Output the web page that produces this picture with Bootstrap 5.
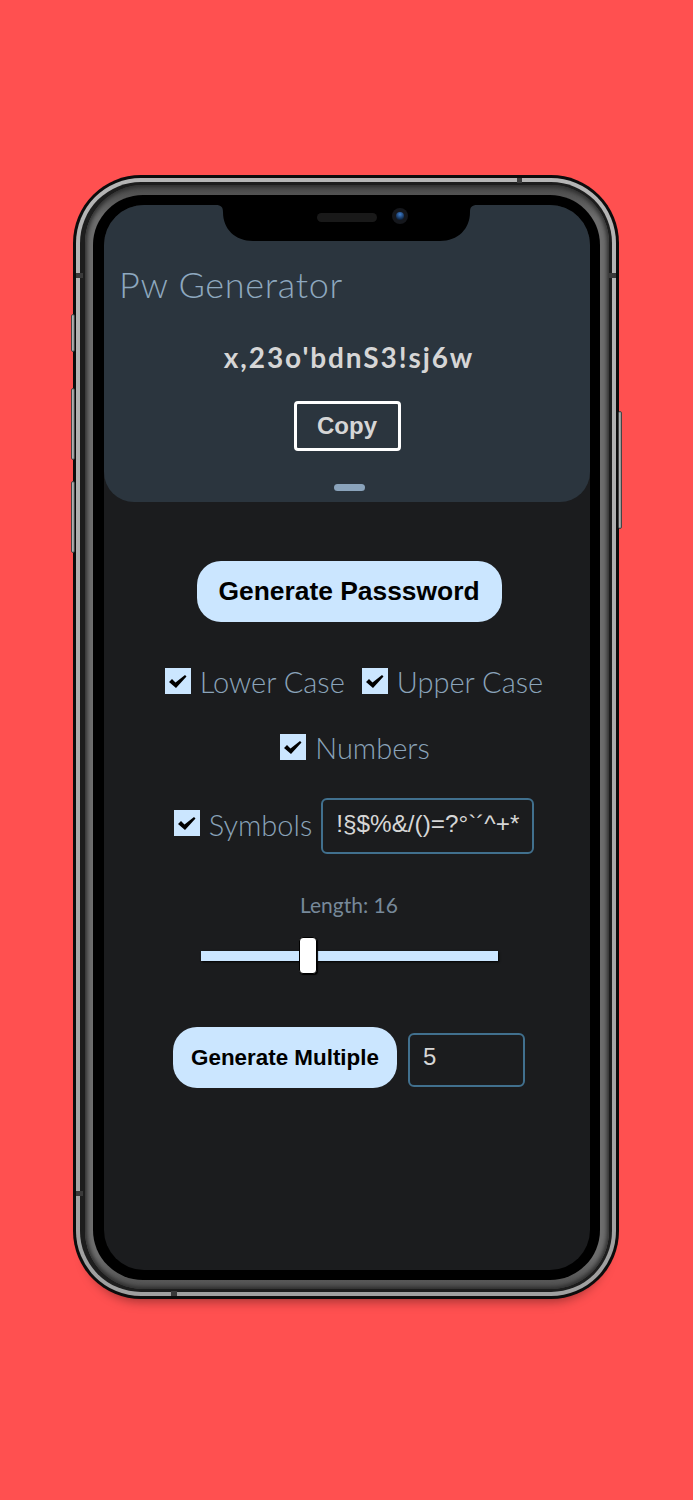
<!DOCTYPE html>
<html lang="en">
<head>
<meta charset="utf-8">
<title>Pw Generator</title>
<link rel="stylesheet" href="https://cdn.jsdelivr.net/npm/bootstrap@5.3.0/dist/css/bootstrap.min.css">
<style>
html,body{margin:0;height:1500px;background:#ff5050;overflow:hidden}
.stage{padding:175px 74px 0 73px}
.ph-shell{position:relative;height:1124px;border-radius:68px;background:#0c0c0c;padding:3px;box-shadow:0 14px 12px -12px rgba(0,0,0,.4)}
.ph-silver{height:100%;border-radius:65px;background:linear-gradient(180deg,#b5b5b5,#a0a0a0);padding:4px}
.ph-dark{height:100%;border-radius:61px;background:#1d1d1d;padding:3px 3px 3px 5px}
.ph-gray{height:100%;border-radius:58px;background:linear-gradient(180deg,#484848 0,#6d6d6d 3%,#6d6d6d 97%,#4f4f4f 100%);padding:10px 9px 9px 8px;box-shadow:inset 0 0 4px 2px #2c2c2c}
.ph-black{height:100%;border-radius:50px;background:#000;padding:10px 10px 10px 11px;position:relative}
.ph-screen{height:100%;border-radius:40px;background:#1b1c1e;overflow:hidden;display:flex;flex-direction:column;font-family:Lato,"Open Sans",sans-serif}
.side-key{position:absolute;background:linear-gradient(90deg,#bdbdbd,#8e8e8e);border:1px solid #444;border-radius:2px;width:4px}
.key-a{left:-2px;top:139px;height:38px}
.key-b{left:-2px;top:213px;height:72px}
.key-c{left:-2px;top:306px;height:72px}
.key-d{right:-3px;top:236px;height:118px;width:4px}
.band{position:absolute;background:#3a3a3a}
.band-t{top:3px;left:444px;width:5px;height:5px}
.band-l{left:3px;top:98px;width:7px;height:5px}
.band-r{right:3px;top:98px;width:7px;height:5px}
.band-bl{left:3px;bottom:103px;width:7px;height:5px}
.band-b{bottom:3px;left:98px;width:6px;height:5px}
.notch{position:absolute;left:123px;top:10px;width:261px;height:36px}
.cam{position:absolute;left:299px;top:13px;width:16px;height:16px;border-radius:50%;background:#15171c;display:flex;align-items:center;justify-content:center}
.cam-lens{display:block;width:8px;height:8px;border-radius:50%;background:radial-gradient(circle at 50% 30%,#3f7fd0,#0e2340 75%)}
.spk{position:absolute;left:224px;top:18px;width:60px;height:9px;border-radius:5px;background:#191919}
.app-head{background:#2b353e;border-radius:0 0 30px 30px;height:297px;padding:58px 15px 0;flex:none;text-align:center;display:flex;flex-direction:column}
.app-title{font-family:Lato,sans-serif;font-weight:300;font-size:36px;line-height:42px;color:#8ea8bf;margin:0;text-align:left;letter-spacing:.7px}
.pw-out{font-family:Lato,sans-serif;font-weight:700;font-size:28px;line-height:34px;color:#d6d6d6;margin:35px 0 0 4px;letter-spacing:1.9px}
.btn-copy{width:107px;height:50px;margin:27px auto 0;padding:0;border:3px solid #fff;border-radius:4px;background:transparent;color:#d6d6d6;font:700 24px/1 "Liberation Sans",sans-serif}
.btn-copy:hover{color:#d6d6d6;border-color:#fff}
.grip{width:31px;height:7px;border-radius:4px;background:#8aa3bb;margin:33px auto 0 215px}
.app-body{flex:1;display:flex;flex-direction:column;align-items:center;padding:59px 0 0 4px}
.btn-sky{background:#cbe6ff;color:#000;border:0;border-radius:24px;font-family:"Liberation Sans",sans-serif;font-weight:700;padding:0}
.btn-sky:hover{background:#cbe6ff;color:#000}
.btn-gen{width:305px;height:61px;font-size:26.4px}
.btn-multi{width:224px;height:61px;font-size:22.4px}
.opt{display:flex;align-items:center;gap:9px;margin:0;font-weight:300;font-size:29px;line-height:34px;color:#8aa3b9}
.opt .form-check-input{width:26px;height:26px;margin:0 0 3px;border:0;border-radius:0;flex:none;background-color:#cbe6ff;background-size:26px 26px;background-position:center;background-image:url("data:image/svg+xml,%3Csvg xmlns='http://www.w3.org/2000/svg' viewBox='0 0 26 26'%3E%3Cpath d='M4 14l3-3 3.5 3.5L20 7l1.5 1.5L11 20z' fill='%23000'/%3E%3C/svg%3E")}
.opt-row-a{margin:43px 0 0 10px;gap:17px}
.opt-row-b{margin:32px 0 0 12px}
.opt-row-c{margin:33px 0 0 10px;gap:9px}
.opt-row-c .opt{margin-bottom:3px}
.field-dark{background:#1b1c1e;border:2px solid #41708e;border-radius:6px;color:#d6d6d6;font-family:"Liberation Sans",sans-serif;font-size:24px;outline:0;box-shadow:none}
.field-sym{width:213px;height:56px;padding:0 0 5px 13px;font-size:24.3px}
.field-num{width:117px;height:54px;padding:0 0 5px 13px;margin-top:4px}
.len-label{font-size:21px;line-height:24px;color:#77899a;margin:39px 0 0;font-weight:400}
.len-range{appearance:none;-webkit-appearance:none;display:block;width:297px;height:37px;margin:20px 0 0;background:transparent}
.len-range::-webkit-slider-runnable-track{height:10px;background:#cbe6ff;box-shadow:1px 1px 2px #000}
.len-range::-webkit-slider-thumb{-webkit-appearance:none;width:18px;height:37px;margin-top:-13.5px;background:#fff;border:1px solid #000;border-radius:4px;box-shadow:1px 1px 1px #000}
.multi-row{display:flex;align-items:center;gap:11px;margin-top:53px}
</style>
</head>
<body>
<div class="stage">
  <div class="ph-shell">
    <span class="side-key key-a"></span><span class="side-key key-b"></span><span class="side-key key-c"></span><span class="side-key key-d"></span>
    <div class="ph-silver"><div class="ph-dark"><div class="ph-gray"><div class="ph-black">
      <div class="ph-screen">
        <header class="app-head">
          <h1 class="app-title">Pw Generator</h1>
          <p class="pw-out">x,23o'bdnS3!sj6w</p>
          <button type="button" class="btn btn-copy">Copy</button>
          <div class="grip"></div>
        </header>
        <main class="app-body">
          <button type="button" class="btn btn-sky btn-gen">Generate Passsword</button>
          <div class="d-flex opt-row-a">
            <label class="opt"><input class="form-check-input" type="checkbox" checked>Lower Case</label>
            <label class="opt"><input class="form-check-input" type="checkbox" checked>Upper Case</label>
          </div>
          <label class="opt opt-row-b"><input class="form-check-input" type="checkbox" checked>Numbers</label>
          <div class="d-flex align-items-center opt-row-c">
            <label class="opt"><input class="form-check-input" type="checkbox" checked>Symbols</label>
            <input class="field-dark field-sym" type="text" value="!§$%&amp;/()=?°`´^+*" aria-label="Symbols">
          </div>
          <p class="len-label">Length: 16</p>
          <input class="len-range" type="range" min="4" max="38" value="16" aria-label="Length">
          <div class="multi-row">
            <button type="button" class="btn btn-sky btn-multi">Generate Multiple</button>
            <input class="field-dark field-num" type="text" value="5" aria-label="Count">
          </div>
        </main>
      </div>
      <svg class="notch" viewBox="0 0 261 36" aria-hidden="true"><path d="M0 0h261c-5 0-7 2-7 7 0 17-12 29-30 29H37C19 36 7 24 7 7 7 2 5 0 0 0z" fill="#000"/></svg>
      <span class="spk"></span>
      <span class="cam"><span class="cam-lens"></span></span>
    </div></div></div></div>
    <span class="band band-t"></span><span class="band band-l"></span><span class="band band-r"></span><span class="band band-bl"></span><span class="band band-b"></span>
  </div>
</div>
</body>
</html>
